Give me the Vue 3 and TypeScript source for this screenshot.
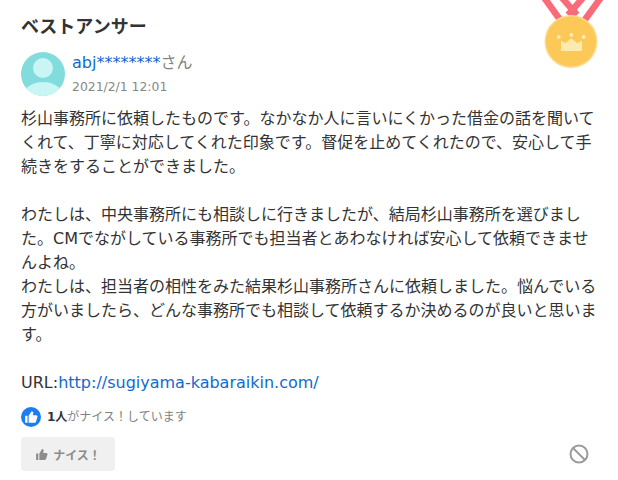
<script setup lang="ts">
const para1 = '杉山事務所に依頼したものです。なかなか人に言いにくかった借金の話を聞いてくれて、丁寧に対応してくれた印象です。督促を止めてくれたので、安心して手続きをすることができました。'
const para2 = 'わたしは、中央事務所にも相談しに行きましたが、結局杉山事務所を選びました。CMでながしている事務所でも担当者とあわなければ安心して依頼できませんよね。'
const para3 = 'わたしは、担当者の相性をみた結果杉山事務所さんに依頼しました。悩んでいる方がいましたら、どんな事務所でも相談して依頼するか決めるのが良いと思います。'
</script>

<template>
  <div class="page">
    <svg class="medal" width="66" height="68" viewBox="0 0 66 68">
      <g fill="none" stroke="#fb6a78" stroke-width="6.500">
        <path d="M0 -8 L21 21" />
        <path d="M65 -8 L44 21" />
        <path d="M17 -8 L37 15" />
        <path d="M48 -8 L28 15" />
      </g>
      <circle cx="31" cy="41.500" r="26.500" fill="#fddc8a" />
      <circle cx="31" cy="41.500" r="25" fill="#fcc858" />
      <g fill="#fdeaae">
        <circle cx="18.700" cy="37" r="2" />
        <circle cx="31.300" cy="35" r="2" />
        <circle cx="43.700" cy="37" r="2" />
        <path d="M21 51 L21 40.700 L25.700 43.300 L31.300 38.300 L37.300 43.300 L42 40.700 L42 51 Z" />
      </g>
    </svg>
    <h2 class="title">ベストアンサー</h2>
    <div class="user">
      <svg class="avatar" width="44" height="44" viewBox="0 0 44 44">
        <defs>
          <clipPath id="av"><circle cx="22" cy="22" r="22" /></clipPath>
        </defs>
        <circle cx="22" cy="22" r="22" fill="#83dcdc" />
        <g clip-path="url(#av)" fill="#c9f6f5">
          <circle cx="22" cy="16" r="10" />
          <ellipse cx="22" cy="48" rx="22" ry="18" />
        </g>
      </svg>
      <div class="meta">
        <div class="name"><a class="link">abj********</a>さん</div>
        <div class="date">2021/2/1 12:01</div>
      </div>
    </div>
    <div class="body">
      <p>{{ para1 }}</p>
      <p class="gap">{{ para2 }}</p>
      <p>{{ para3 }}</p>
      <p class="gap">URL:<a class="link">http://sugiyama-kabaraikin.com/</a></p>
    </div>
    <div class="likes">
      <span class="badge">
        <svg width="14" height="14" viewBox="0 0 24 24" fill="#fff">
          <path d="M2 10h4v12H2zM8 22V10l5-8c2 0 3 1.500 3 3l-1 4h6c1.500 0 2.500 1.500 2 3l-2.500 8c-.4 1.200-1.200 2-2.500 2z" />
        </svg>
      </span>
      <span class="likes-text"><b>1人</b>がナイス！しています</span>
    </div>
    <div class="actions">
      <button class="nice">
        <svg width="13" height="13" viewBox="0 0 24 24" fill="#8c8c8c">
          <path d="M2 10h4v12H2zM8 22V10l5-8c2 0 3 1.500 3 3l-1 4h6c1.500 0 2.500 1.500 2 3l-2.500 8c-.4 1.200-1.200 2-2.500 2z" />
        </svg>
        <span>ナイス！</span>
      </button>
      <svg class="ban" width="20" height="20" viewBox="0 0 20 20" fill="none" stroke="#9b9b9b" stroke-width="2">
        <circle cx="10" cy="10" r="8.500" />
        <path d="M4 4 L16 16" />
      </svg>
    </div>
  </div>
</template>

<style scoped>
.page {
  position: relative;
  width: 618px;
  height: 480px;
  box-sizing: border-box;
  padding: 14px 20px 0 21px;
  overflow: hidden;
  background: #fff;
  color: #333;
  font-family: "DejaVu Sans", "Noto Sans CJK JP", sans-serif;
}
.medal {
  position: absolute;
  left: 540px;
  top: 0;
}
.title {
  margin: 0;
  font-size: 18px;
  line-height: 26px;
  font-weight: 700;
}
.user {
  display: flex;
  gap: 7px;
  margin-top: 12px;
}
.meta {
  padding-top: 1px;
}
.name {
  font-size: 16px;
  line-height: 20px;
  color: #808080;
}
.link {
  color: #0f6ad0;
}
.date {
  margin-top: 6px;
  font-size: 12.400px;
  line-height: 16px;
  color: #888;
}
.body {
  margin-top: 11px;
  font-size: 16px;
  line-height: 24px;
  width: 578px;
}
.body p {
  margin: 0;
}
.body .gap {
  margin-top: 24px;
}
.likes {
  display: flex;
  align-items: center;
  gap: 6px;
  margin-top: 12px;
}
.badge {
  width: 20px;
  height: 20px;
  border-radius: 50%;
  background: #1d7cf2;
  display: flex;
  align-items: center;
  justify-content: center;
}
.likes-text {
  font-size: 12px;
  line-height: 20px;
  color: #808080;
}
.likes-text b {
  color: #333;
}
.actions {
  display: flex;
  justify-content: space-between;
  align-items: center;
  margin-top: 10px;
  width: 568px;
}
.nice {
  width: 94px;
  height: 34px;
  border: none;
  border-radius: 4px;
  background: #f0f0f0;
  color: #8c8c8c;
  font: 700 12px "DejaVu Sans", "Noto Sans CJK JP", sans-serif;
  display: flex;
  align-items: center;
  justify-content: center;
  gap: 5px;
  padding: 0;
}
</style>
